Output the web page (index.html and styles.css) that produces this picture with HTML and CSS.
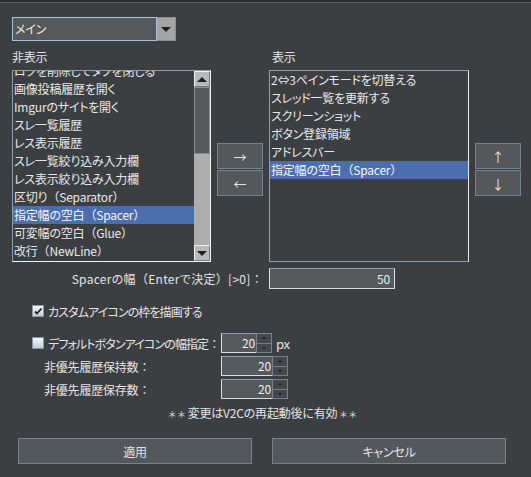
FILE: index.html
```html
<!DOCTYPE html>
<html lang="ja">
<head>
<meta charset="utf-8">
<link rel="stylesheet" href="styles.css">
</head>
<body>
<div class="topbar"></div>
<div class="page">
  <div class="combo">
    <div class="combo-text">メイン</div>
    <div class="combo-btn"><span class="tri-down"></span></div>
  </div>

  <div class="lists">
    <div class="lbl lbl-left">非表示</div>
    <div></div>
    <div class="lbl lbl-right">表示</div>
    <div></div>

    <div class="list list-left">
      <div class="items scrolled">
        <div class="item">ロクを削除してタブを閉じる</div>
        <div class="item">画像投稿履歴を開く</div>
        <div class="item">Imgurのサイトを開く</div>
        <div class="item">スレ一覧履歴</div>
        <div class="item">レス表示履歴</div>
        <div class="item">スレ一覧絞り込み入力欄</div>
        <div class="item">レス表示絞り込み入力欄</div>
        <div class="item">区切り<span class="fw">（</span>Separator<span class="fw">）</span></div>
        <div class="item sel">指定幅の空白<span class="fw">（</span>Spacer<span class="fw">）</span></div>
        <div class="item">可変幅の空白<span class="fw">（</span>Glue<span class="fw">）</span></div>
        <div class="item">改行<span class="fw">（</span>NewLine<span class="fw">）</span></div>
      </div>
      <div class="vscroll">
        <div class="sb-btn"><span class="tri-up"></span></div>
        <div class="sb-thumb"></div>
        <div class="sb-track"></div>
        <div class="sb-btn"><span class="tri-down"></span></div>
      </div>
    </div>

    <div class="btn-stack">
      <div class="btn small">→</div>
      <div class="btn small">←</div>
    </div>

    <div class="list list-right">
      <div class="items">
        <div class="item">2⇔3ペインモードを切替える</div>
        <div class="item">スレッド一覧を更新する</div>
        <div class="item">スクリーンショット</div>
        <div class="item">ボタン登録領域</div>
        <div class="item">アドレスバー</div>
        <div class="item sel">指定幅の空白<span class="fw">（</span>Spacer<span class="fw">）</span></div>
      </div>
    </div>

    <div class="btn-stack">
      <div class="btn small">↑</div>
      <div class="btn small">↓</div>
    </div>
  </div>

  <div class="spacer-row">
    <div class="spacer-label">Spacerの幅<span class="fw">（</span>Enterで決定<span class="fw">）</span>[&gt;0]<span class="fw">：</span></div>
    <div class="field wide">50</div>
  </div>

  <div class="check-row">
    <span class="checkbox checked"><svg viewBox="0 0 10 10" width="10" height="10"><path d="M2 5.5 L4 7.5 L8.5 2.5" fill="none" stroke="#1e1e1e" stroke-width="1.8"/></svg></span>
    <span class="kana">カスタムアイコンの枠を描画する</span>
  </div>

  <div class="opts">
    <div class="opt-label check-label"><span class="checkbox"></span><span class="kana">デフォルトボタンアイコンの幅指定<span class="fw">：</span></span></div>
    <div class="opt-ctl">
      <div class="spinner">
        <div class="field s1">20</div>
        <div class="spin"><div class="spin-b"><span class="mini-up"></span></div><div class="spin-b"><span class="mini-down"></span></div></div>
      </div>
      <span class="unit">px</span>
    </div>

    <div class="opt-label indent">非優先履歴保持数<span class="fw">：</span></div>
    <div class="opt-ctl">
      <div class="spinner">
        <div class="field s2">20</div>
        <div class="spin"><div class="spin-b"><span class="mini-up"></span></div><div class="spin-b"><span class="mini-down"></span></div></div>
      </div>
    </div>

    <div class="opt-label indent">非優先履歴保存数<span class="fw">：</span></div>
    <div class="opt-ctl">
      <div class="spinner">
        <div class="field s2">20</div>
        <div class="spin"><div class="spin-b"><span class="mini-up"></span></div><div class="spin-b"><span class="mini-down"></span></div></div>
      </div>
    </div>
  </div>

  <div class="note"><span class="star">＊ ＊</span> 変更はV2Cの再起動後に有効 <span class="star">＊ ＊</span></div>

  <div class="actions">
    <div class="btn big">適用</div>
    <div class="btn big">キャンセル</div>
  </div>
</div>
</body>
</html>
```
FILE: styles.css
```css
html, body {
  margin: 0;
  padding: 0;
  background: #3c3f41;
}
body {
  width: 531px;
  height: 477px;
  overflow: hidden;
  font-family: "Noto Sans CJK JP", "Noto Sans", sans-serif;
  font-size: 12px;
  font-feature-settings: "palt";
  letter-spacing: -0.2px;
  color: #e4e4e4;
}
.fw {
  font-feature-settings: normal;
}
.kana {
  letter-spacing: -0.9px;
}
.topbar {
  height: 2px;
  background: #2b2c2e;
  border-bottom: 1px solid #5a5d60;
}
.page {
  padding: 14px 0 0 12px;
}

/* combo */
.combo {
  display: flex;
  width: 164px;
  height: 24px;
}
.combo-text {
  flex: 1;
  box-sizing: border-box;
  background: #55595b;
  border: 1px solid #a9c1d8;
  line-height: 22px;
  padding-left: 2px;
  color: #eaeaea;
}
.combo-btn {
  width: 19px;
  box-sizing: border-box;
  background: #a4a4a4;
  border: 1px solid #8c8c8c;
  border-left: none;
  display: flex;
  align-items: center;
  justify-content: center;
}
.tri-down {
  width: 0; height: 0;
  border-left: 5px solid transparent;
  border-right: 5px solid transparent;
  border-top: 5px solid #222;
}
.tri-up {
  width: 0; height: 0;
  border-left: 5px solid transparent;
  border-right: 5px solid transparent;
  border-bottom: 5px solid #222;
}

/* lists */
.lists {
  display: grid;
  grid-template-columns: 199px 46px 200px 46px;
  grid-template-rows: 26px 192px;
  column-gap: 6px;
  margin-top: 3px;
}
.lbl {
  line-height: 22px;
  padding-top: 2px;
}
.lbl-right { padding-left: 3px; }
.list {
  box-sizing: border-box;
  border: 1px solid #8e9eab;
  border-right-color: #f2f2f2;
  border-bottom-color: #f2f2f2;
  background: #3c3f41;
  overflow: hidden;
  display: flex;
}
.list-right {
  border-color: #8e9eab;
  border-right-color: #e8e8e8;
}
.items {
  flex: 1;
  min-width: 0;
  overflow: hidden;
}
.scrolled .item:first-child {
  margin-top: -9px;
}
.item {
  height: 18px;
  line-height: 18px;
  padding-left: 1px;
  white-space: nowrap;
  color: #e8e8e8;
}
.item.sel {
  background: #4b6eaf;
  color: #f6f6f6;
}
.vscroll {
  width: 16px;
  flex-shrink: 0;
  display: flex;
  flex-direction: column;
}
.sb-btn {
  height: 16px;
  box-sizing: border-box;
  background: #b9b9b9;
  border: 1px solid #f0f0f0;
  border-right-color: #7a7a7a;
  border-bottom-color: #7a7a7a;
  display: flex;
  align-items: center;
  justify-content: center;
}
.sb-thumb {
  height: 67px;
  box-sizing: border-box;
  background: #56595b;
  border: 1px solid #8b8e90;
}
.sb-track {
  flex: 1;
  background: #adadad;
}

/* buttons */
.btn-stack {
  align-self: center;
  display: flex;
  flex-direction: column;
  gap: 1px;
  margin-top: 7px;
}
.btn {
  box-sizing: border-box;
  background: #54585a;
  border: 1px solid #74838f;
  color: #e4e4e4;
  display: flex;
  align-items: center;
  justify-content: center;
}
.btn.small {
  height: 26px;
  font-size: 13px;
}

/* spacer row */
.spacer-row {
  display: flex;
  align-items: center;
  margin-top: 6px;
  height: 21px;
}
.spacer-label {
  width: 251px;
  text-align: right;
  white-space: nowrap;
  letter-spacing: 0.3px;
}
.field {
  box-sizing: border-box;
  background: #55595b;
  border: 1px solid #d6dde4;
  border-top-color: #8e9eab;
  text-align: right;
  color: #ececec;
}
.field.wide {
  margin-left: 6px;
  width: 126px;
  height: 21px;
  line-height: 19px;
  padding-right: 4px;
}

/* checkbox */
.check-row {
  display: flex;
  align-items: center;
  gap: 4px;
  margin: 15px 0 0 20px;
  height: 14px;
}
.checkbox {
  flex-shrink: 0;
  width: 12px;
  height: 12px;
  box-sizing: border-box;
  border: 1px solid #8396a8;
  background: linear-gradient(#f4f7fa, #c3ced9);
  display: inline-flex;
  align-items: center;
  justify-content: center;
}
.checkbox svg { display: block; }

/* options grid */
.opts {
  display: grid;
  grid-template-columns: 189px auto;
  grid-template-rows: 20px 20px 20px;
  row-gap: 3px;
  margin: 15px 0 0 20px;
  align-items: center;
}
.opt-label {
  white-space: nowrap;
}
.check-label {
  display: flex;
  align-items: center;
  gap: 4px;
}
.indent { padding-left: 12px; }
.opt-ctl {
  display: flex;
  align-items: center;
  gap: 4px;
}
.spinner {
  display: flex;
  height: 20px;
}
.field.s1, .field.s2 {
  height: 20px;
  line-height: 18px;
  padding-right: 1px;
  border-right: none;
}
.field.s1 { width: 35px; }
.field.s2 { width: 51px; }
.spin {
  width: 16px;
  display: flex;
  flex-direction: column;
}
.spin-b {
  flex: 1;
  box-sizing: border-box;
  background: #45484b;
  border: 1px solid #74838f;
  display: flex;
  align-items: center;
  justify-content: center;
}
.spin-b + .spin-b { border-top: none; }
.mini-up {
  width: 0; height: 0;
  border-left: 2px solid transparent;
  border-right: 2px solid transparent;
  border-bottom: 2px solid #1e1e1e;
}
.mini-down {
  width: 0; height: 0;
  border-left: 2px solid transparent;
  border-right: 2px solid transparent;
  border-top: 2px solid #1e1e1e;
}
.unit {
  font-size: 13px;
}

/* note */
.note {
  margin-top: 4px;
  text-align: center;
  width: 501px;
  height: 20px;
  line-height: 20px;
}
.star {
  font-size: 9px;
  letter-spacing: 0;
}

/* actions */
.actions {
  display: flex;
  gap: 20px;
  margin: 15px 0 0 6px;
}
.btn.big {
  width: 234px;
  height: 26px;
}
```
